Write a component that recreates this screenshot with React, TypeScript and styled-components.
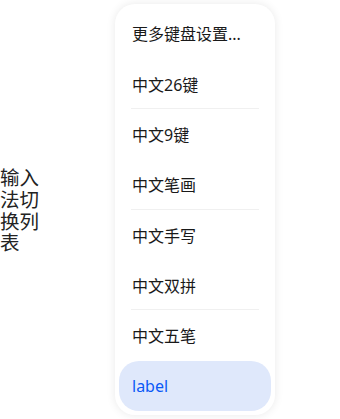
import React from "react";
import styled, { createGlobalStyle } from "styled-components";

const Global = createGlobalStyle`
  html, body { margin: 0; padding: 0; background: #ffffff; }
  body { font-family: "Noto Sans", "Noto Sans CJK SC", sans-serif; }
`;

const Page = styled.div`
  width: 340px;
  height: 419px;
  display: flex;
  align-items: center;
  box-sizing: border-box;
`;

const SideLabel = styled.div`
  width: 40px;
  font-family: "Noto Sans CJK SC", sans-serif;
  font-size: 19.5px;
  line-height: 21.7px;
  color: #222222;
  word-break: break-all;
`;

const Menu = styled.div`
  margin-left: 75px;
  width: 160px;
  height: 411px;
  box-sizing: border-box;
  padding: 4px;
  background: #ffffff;
  border-radius: 20px;
  box-shadow: 0 0 10px rgba(0, 0, 0, 0.09);
  display: flex;
  flex-direction: column;
`;

const Item = styled.div<{ $divider?: boolean; $selected?: boolean }>`
  position: relative;
  height: 50.375px;
  flex: none;
  box-sizing: border-box;
  display: flex;
  align-items: center;
  padding-left: 13px;
  border-radius: 20px;
  font-family: "Noto Sans", "Noto Sans CJK SC", sans-serif;
  font-size: 16px;
  color: ${(p) => (p.$selected ? "#0a59f7" : "#191919")};
  background: ${(p) => (p.$selected ? "#dfe8fb" : "transparent")};
  white-space: nowrap;

  &::after {
    content: "";
    display: ${(p) => (p.$divider ? "block" : "none")};
    position: absolute;
    left: 12px;
    right: 12px;
    bottom: 0;
    height: 1px;
    background: #f0f0f0;
  }
`;

const items = [
  { text: "更多键盘设置...", divider: false },
  { text: "中文26键", divider: true },
  { text: "中文9键", divider: false },
  { text: "中文笔画", divider: true },
  { text: "中文手写", divider: false },
  { text: "中文双拼", divider: true },
  { text: "中文五笔", divider: false },
];

export default function App() {
  return (
    <>
      <Global />
      <Page>
        <SideLabel>输入法切换列表</SideLabel>
        <Menu>
          {items.map((it) => (
            <Item key={it.text} $divider={it.divider}>
              {it.text}
            </Item>
          ))}
          <Item $selected>label</Item>
        </Menu>
      </Page>
    </>
  );
}
